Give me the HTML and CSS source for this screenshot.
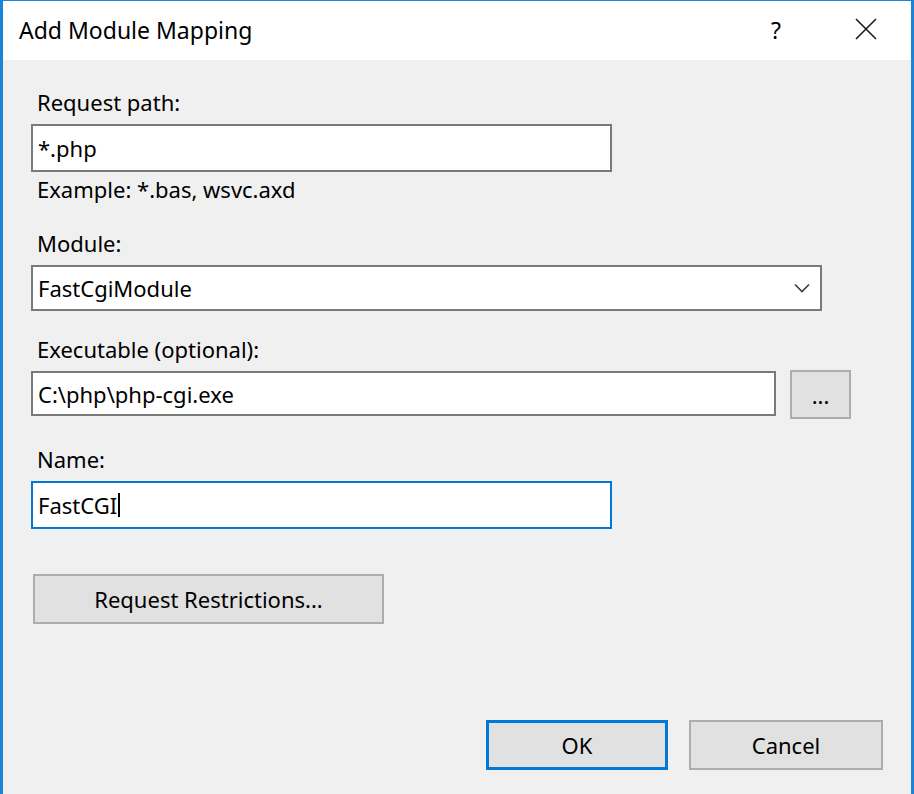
FILE: index.html
```html
<html>

<head>
    <title>Add Module Mapping</title>
    <meta name="viewport" content="width=device-width, initial-scale=1">
    <link rel="stylesheet" href="styles.css">
</head>

<body>
    <div class="window">
        <header class="titlebar">
            <span class="title">Add Module Mapping</span>
            <span class="help">?</span>
            <span class="close">
                <svg width="22" height="22" viewBox="0 0 22 22">
                    <path d="M1 1 L21 21 M21 1 L1 21" stroke="#1a1a1a" stroke-width="1.6" fill="none" />
                </svg>
            </span>
        </header>
        <main class="content">
            <section class="field">
                <label>Request path:</label>
                <div class="textbox wide">*.php</div>
                <p class="hint">Example: *.bas, wsvc.axd</p>
            </section>
            <section class="field">
                <label>Module:</label>
                <div class="textbox combo">
                    <span>FastCgiModule</span>
                    <svg width="16" height="10" viewBox="0 0 16 10">
                        <path d="M1 1.5 L8 8.5 L15 1.5" stroke="#3c3c3c" stroke-width="1.6" fill="none" />
                    </svg>
                </div>
            </section>
            <section class="field">
                <label>Executable (optional):</label>
                <div class="row">
                    <div class="textbox exec">C:\php\php-cgi.exe</div>
                    <button class="btn browse">...</button>
                </div>
            </section>
            <section class="field">
                <label>Name:</label>
                <div class="textbox wide focused">FastCGI<span class="caret"></span></div>
            </section>
            <button class="btn restrictions">Request Restrictions...</button>
            <footer class="actions">
                <button class="btn ok">OK</button>
                <button class="btn cancel">Cancel</button>
            </footer>
        </main>
    </div>
</body>

</html>
```

FILE: styles.css
```css
html {
    width: 100vw;
    max-width: 100%;
}

body {
    margin: 0px;
    padding: 0px;
    font-family: "Noto Sans", "Open Sans", sans-serif;
    font-size: 22px;
    color: #000;
    background: #f0f0f0;
}

.window {
    height: 100vh;
    box-sizing: border-box;
    border: 3px solid #1a84d8;
    border-top-width: 1px;
    border-bottom: none;
    display: flex;
    flex-direction: column;
    background: #f0f0f0;
}

.titlebar {
    height: 59px;
    background: #fff;
    display: flex;
    align-items: center;
    padding-left: 16px;
}

.title {
    flex: 1;
    font-size: 23px;
    margin-top: -2px;
}

.help {
    font-size: 23px;
    width: 22px;
    margin-right: 62px;
    margin-top: -2px;
}

.close {
    width: 22px;
    height: 22px;
    margin-right: 34px;
    margin-top: -4px;
}

.content {
    flex: 1;
    padding: 30px 0px 0px 28px;
    display: flex;
    flex-direction: column;
}

.field label {
    display: block;
    line-height: 24px;
    padding-left: 6px;
    margin-bottom: 10px;
}

.field {
    margin-bottom: 26px;
}

.field:first-child {
    margin-bottom: 30px;
}

.textbox {
    box-sizing: border-box;
    height: 48px;
    border: 2px solid #7a7a7a;
    background: #fff;
    padding-left: 5px;
    display: flex;
    align-items: center;
}

.wide {
    width: 581px;
}

.hint {
    margin: 5px 0px 0px 0px;
    padding-left: 6px;
    line-height: 24px;
}

.combo {
    width: 791px;
    height: 46px;
    justify-content: space-between;
    padding-right: 10px;
}

.row {
    display: flex;
    align-items: flex-start;
    gap: 14px;
    margin-bottom: 2px;
}

.exec {
    width: 745px;
    height: 45px;
}

.focused {
    border-color: #0078d7;
}

.caret {
    display: inline-block;
    width: 2px;
    height: 24px;
    background: #000;
    margin-left: 1px;
}

.btn {
    font-family: inherit;
    font-size: 22px;
    color: #000;
    background: #e1e1e1;
    border: 2px solid #adadad;
    box-sizing: border-box;
    padding: 0px;
    cursor: default;
}

.browse {
    width: 61px;
    height: 49px;
    margin-top: -1px;
}

.restrictions {
    width: 351px;
    height: 50px;
    margin-left: 2px;
    margin-top: 19px;
}

.actions {
    margin-top: auto;
    margin-bottom: 24px;
    display: flex;
    gap: 21px;
    padding-left: 455px;
}

.ok {
    width: 182px;
    height: 50px;
    border: 3px solid #0078d7;
}

.cancel {
    width: 194px;
    height: 50px;
}
```
